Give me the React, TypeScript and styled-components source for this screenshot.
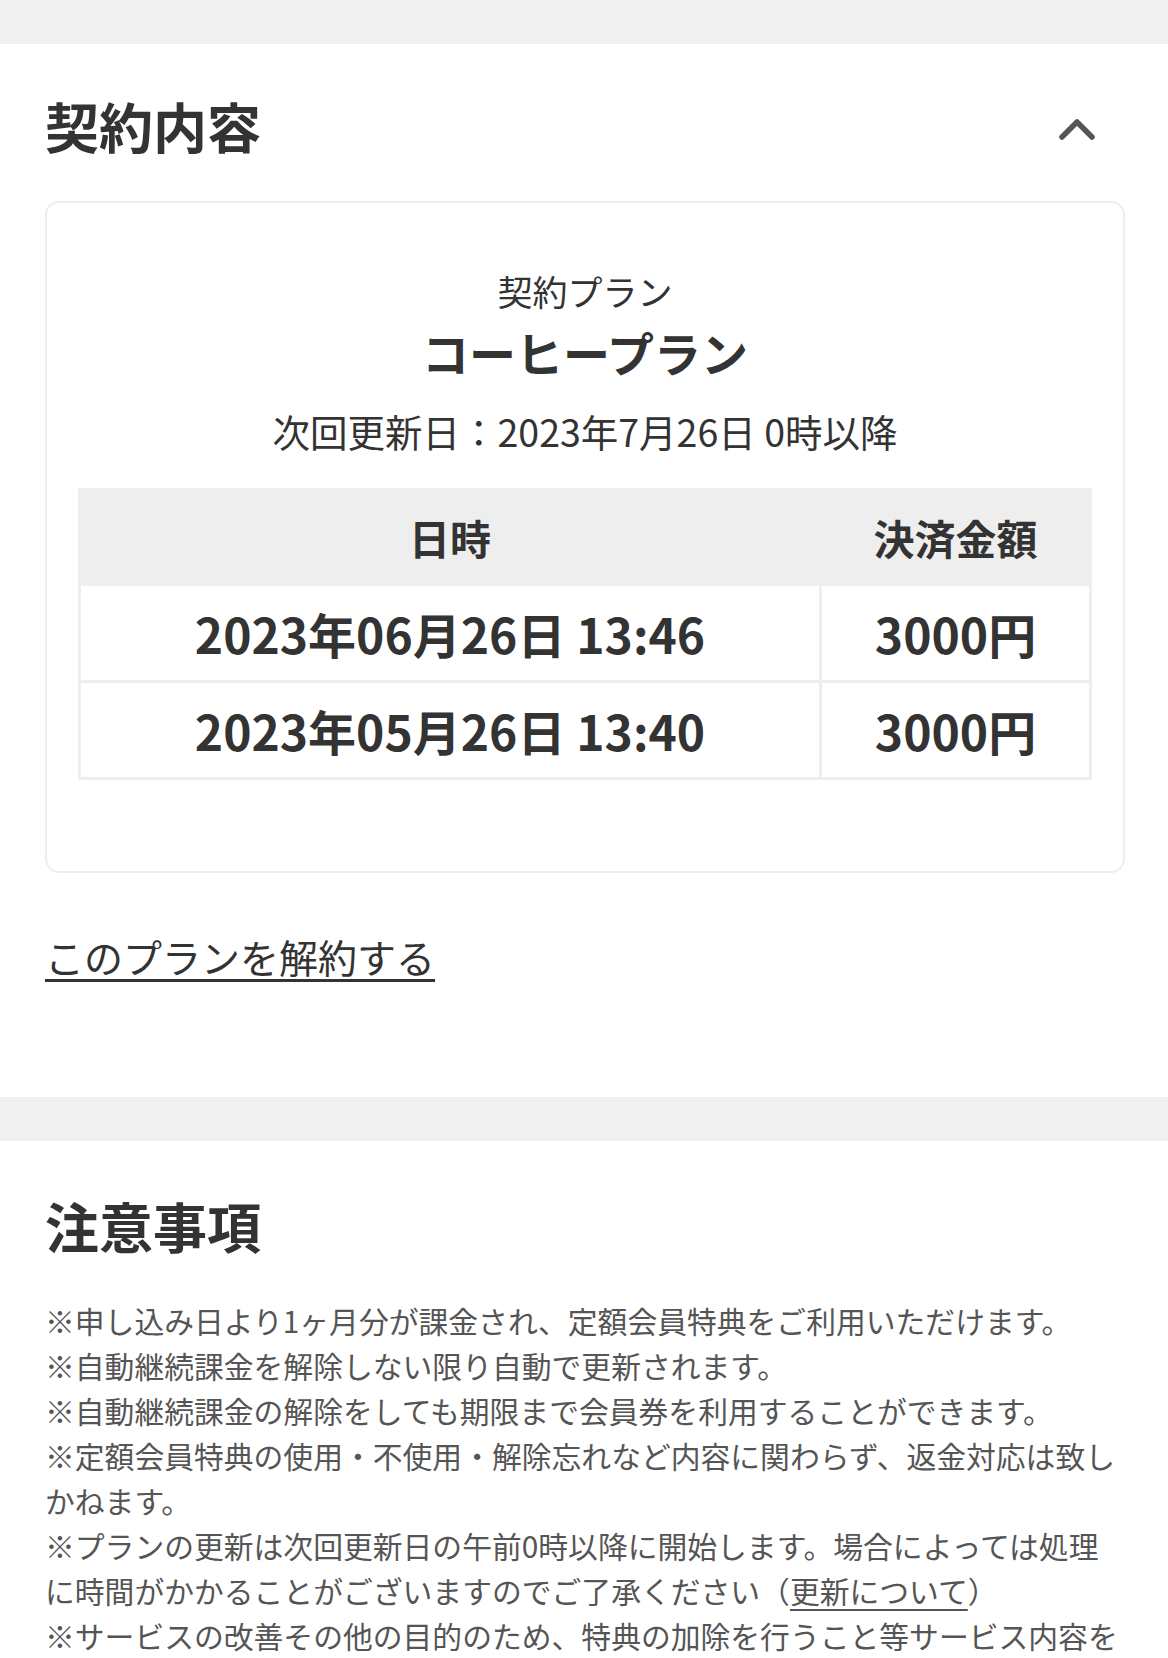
import React from 'react';
import styled, { createGlobalStyle } from 'styled-components';

const GlobalStyle = createGlobalStyle`
  body {
    margin: 0;
    background: #fff;
    color: #333;
    font-family: "Noto Sans CJK JP", "Noto Sans", sans-serif;
  }
`;

const Band = styled.div`
  height: 44px;
  background: #f0f0f0;
`;

const Section = styled.section<{ $top: number; $bottom: number }>`
  padding: ${p => p.$top}px 43px ${p => p.$bottom}px 45px;
`;

const HeadingRow = styled.div`
  display: flex;
  align-items: center;
  justify-content: space-between;
`;

const Heading = styled.h2`
  margin: 0;
  font-size: 54px;
  line-height: 78px;
  font-weight: 700;
  color: #333;
`;

const Toggle = styled.button`
  display: flex;
  align-items: center;
  justify-content: center;
  width: 36px;
  height: 24px;
  margin: 6px 30px 0 0;
  padding: 0;
  border: none;
  background: none;
`;

const Card = styled.div`
  margin-top: 36px;
  border: 2px solid #eee;
  border-radius: 14px;
  padding: 62px 31px 91px;
  text-align: center;
`;

const PlanLabel = styled.div`
  font-size: 35px;
  line-height: 52px;
`;

const PlanName = styled.div`
  margin-top: 5px;
  font-size: 47px;
  line-height: 60px;
  font-weight: 700;
`;

const NextDate = styled.div`
  margin-top: 23px;
  font-size: 37.5px;
  line-height: 52px;
`;

const Table = styled.table`
  margin-top: 31px;
  width: 100%;
  border-collapse: collapse;
  table-layout: fixed;
`;

const Th = styled.th<{ $w?: number }>`
  width: ${p => (p.$w ? `${p.$w}px` : 'auto')};
  height: 92px;
  padding: 0;
  background: #eee;
  border: 3px solid #eee;
  font-size: 41px;
  font-weight: 700;
`;

const Td = styled.td`
  height: 94px;
  padding: 0;
  border: 3px solid #eee;
  font-size: 48px;
  font-weight: 700;
`;

const CancelLink = styled.a`
  display: inline-block;
  margin-top: 54px;
  font-size: 39px;
  line-height: 58px;
  color: #333;
  text-decoration: underline;
  text-underline-offset: 6px;
  text-decoration-thickness: 3px;
`;

const Notes = styled.div`
  margin-top: 33px;
  font-size: 29.8px;
  line-height: 45px;
  color: #555;

  p {
    margin: 0;
  }

  a {
    color: #555;
    text-decoration: underline;
    text-underline-offset: 6px;
  }
`;

const rows = [
  { date: '2023年06月26日 13:46', amount: '3000円' },
  { date: '2023年05月26日 13:40', amount: '3000円' },
];

export default function App() {
  return (
    <>
      <GlobalStyle />
      <Band />
      <Section $top={43} $bottom={112}>
        <HeadingRow>
          <Heading>契約内容</Heading>
          <Toggle aria-label="閉じる">
            <svg width="36" height="22" viewBox="0 0 36 22">
              <polyline
                points="3,19 18,4 33,19"
                fill="none"
                stroke="#555"
                strokeWidth="5.5"
                strokeLinecap="round"
                strokeLinejoin="round"
              />
            </svg>
          </Toggle>
        </HeadingRow>
        <Card>
          <PlanLabel>契約プラン</PlanLabel>
          <PlanName>コーヒープラン</PlanName>
          <NextDate>次回更新日：2023年7月26日 0時以降</NextDate>
          <Table>
            <thead>
              <tr>
                <Th $w={738}>日時</Th>
                <Th>決済金額</Th>
              </tr>
            </thead>
            <tbody>
              {rows.map(r => (
                <tr key={r.date}>
                  <Td>{r.date}</Td>
                  <Td>{r.amount}</Td>
                </tr>
              ))}
            </tbody>
          </Table>
        </Card>
        <CancelLink href="#">このプランを解約する</CancelLink>
      </Section>
      <Band />
      <Section $top={46} $bottom={60}>
        <Heading>注意事項</Heading>
        <Notes>
          <p>※申し込み日より1ヶ月分が課金され、定額会員特典をご利用いただけます。</p>
          <p>※自動継続課金を解除しない限り自動で更新されます。</p>
          <p>※自動継続課金の解除をしても期限まで会員券を利用することができます。</p>
          <p>※定額会員特典の使用・不使用・解除忘れなど内容に関わらず、返金対応は致しかねます。</p>
          <p>
            ※プランの更新は次回更新日の午前0時以降に開始します。場合によっては処理に時間がかかることがございますのでご了承ください（<a href="#">更新について</a>）
          </p>
          <p>※サービスの改善その他の目的のため、特典の加除を行うこと等サービス内容を変更する場合がございます。</p>
        </Notes>
      </Section>
    </>
  );
}
